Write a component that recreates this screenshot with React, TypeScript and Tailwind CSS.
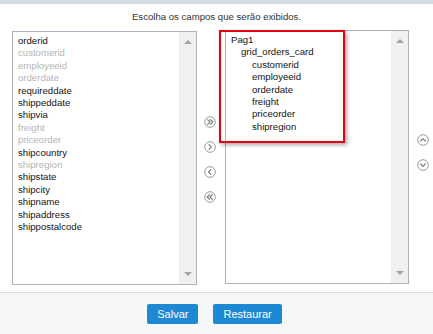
import clsx from "clsx";

const leftFields = [
  { name: "orderid", used: false },
  { name: "customerid", used: true },
  { name: "employeeid", used: true },
  { name: "orderdate", used: true },
  { name: "requireddate", used: false },
  { name: "shippeddate", used: false },
  { name: "shipvia", used: false },
  { name: "freight", used: true },
  { name: "priceorder", used: true },
  { name: "shipcountry", used: false },
  { name: "shipregion", used: true },
  { name: "shipstate", used: false },
  { name: "shipcity", used: false },
  { name: "shipname", used: false },
  { name: "shipaddress", used: false },
  { name: "shippostalcode", used: false },
];

const selected = [
  "customerid",
  "employeeid",
  "orderdate",
  "freight",
  "priceorder",
  "shipregion",
];

type Dir = "right" | "rightAll" | "left" | "leftAll" | "up" | "down";

const chevrons: Record<Dir, string> = {
  right: "M5 3.6 L7.4 6 L5 8.4",
  rightAll: "M3.6 3.6 L6 6 L3.6 8.4 M6.4 3.6 L8.8 6 L6.4 8.4",
  left: "M7 3.6 L4.6 6 L7 8.4",
  leftAll: "M5.6 3.6 L3.2 6 L5.6 8.4 M8.4 3.6 L6 6 L8.4 8.4",
  up: "M3.6 7 L6 4.6 L8.4 7",
  down: "M3.6 5 L6 7.4 L8.4 5",
};

const CircleButton = ({ dir }: { dir: Dir }) => (
  <button type="button" className="w-[12px] h-[12px] flex items-center justify-center cursor-pointer">
    <svg width="12" height="12" viewBox="0 0 12 12" fill="none">
      <circle cx="6" cy="6" r="5.3" stroke="#9a9a9a" strokeWidth="1" fill="#fff" />
      <path d={chevrons[dir]} stroke="#7d7d7d" strokeWidth="1.2" strokeLinecap="round" strokeLinejoin="round" />
    </svg>
  </button>
);

const Scrollbar = () => (
  <div className="w-[17px] h-full bg-[#f0f0f0] flex flex-col items-center justify-between pt-[8px] pb-[8px]">
    <div className="w-0 h-0 border-l-[4px] border-r-[4px] border-b-[4px] border-l-transparent border-r-transparent border-b-[#a3a3a3]" />
    <div className="w-0 h-0 border-l-[4px] border-r-[4px] border-t-[4px] border-l-transparent border-r-transparent border-t-[#a3a3a3]" />
  </div>
);

export default function App() {
  return (
    <div
      className="relative w-[433px] h-[334px] bg-white flex flex-col overflow-hidden"
      style={{ fontFamily: '"Liberation Sans", Arial, sans-serif' }}
    >
      <div className="h-[4px] bg-[#d5dbe1]" />

      <div className="h-[27px] pt-[7px] text-center text-[9.6px] leading-[12.4px] text-[#333]">
        Escolha os campos que serão exibidos.
      </div>

      <div className="h-[261px] flex items-start">
        <div className="ml-[12px] w-[185px] h-[254px] border border-[#a9b3bf] bg-white flex">
          <ul className="flex-1 pl-[5px] pt-[3px] text-[9.6px] leading-[12.4px]">
            {leftFields.map((f) => (
              <li key={f.name} className={clsx(f.used ? "text-[#b5b5b5]" : "text-[#141414]")}>
                {f.name}
              </li>
            ))}
          </ul>
          <Scrollbar />
        </div>

        <div className="w-[28px] h-[254px] flex flex-col items-center justify-center gap-[13px] pr-[3px] pt-[3px]">
          <CircleButton dir="rightAll" />
          <CircleButton dir="right" />
          <CircleButton dir="left" />
          <CircleButton dir="leftAll" />
        </div>

        <div className="w-[184px] h-[254px] -mt-[1px] border border-[#a9b3bf] bg-white flex">
          <div className="flex-1 pl-[5px] pt-[3px] text-[9.6px] leading-[12.4px] text-[#141414]">
            <div>Pag1</div>
            <div className="pl-[10px]">grid_orders_card</div>
            {selected.map((s) => (
              <div key={s} className="pl-[21px]">
                {s}
              </div>
            ))}
          </div>
          <Scrollbar />
        </div>

        <div className="w-[24px] h-[254px] flex flex-col items-center justify-center gap-[13px] pb-[11px] pl-[4px]">
          <CircleButton dir="up" />
          <CircleButton dir="down" />
        </div>
      </div>

      <div className="flex-1 border-t border-[#d9dee4] bg-[#f6f7f9] flex items-center justify-center gap-[15px] pr-[4px] pt-[1px]">
        <button
          type="button"
          className="h-[20px] px-[10px] rounded-[2px] bg-[#1e88d3] text-white text-[11px] cursor-pointer"
        >
          Salvar
        </button>
        <button
          type="button"
          className="h-[20px] px-[10px] rounded-[2px] bg-[#1e88d3] text-white text-[11px] cursor-pointer"
        >
          Restaurar
        </button>
      </div>

      <div className="absolute left-[219px] top-[30px] w-[126px] h-[113px] border-2 border-[#e3000f] shadow-[2px_2px_4px_rgba(0,0,0,0.35)] pointer-events-none" />
    </div>
  );
}
